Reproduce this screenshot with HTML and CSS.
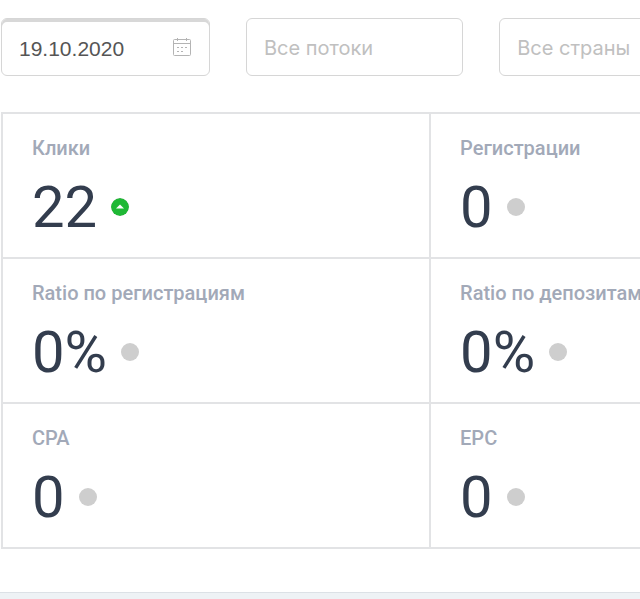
FILE: index.html
```html
<!DOCTYPE html>
<html lang="ru">
<head>
  <meta charset="UTF-8">
  <meta name="viewport" content="width=device-width, initial-scale=1.0">
  <title>Статистика</title>
  <link rel="stylesheet" href="styles.css">
</head>
<body>
  <main class="panel">
    <form class="filters">
      <div class="field date">
        <input type="text" class="input" aria-label="Дата" value="19.10.2020">
        <svg class="calendar" viewBox="0 0 20 20" width="20" height="20" fill="none" stroke="#b4b4b4" aria-hidden="true">
          <rect x="1.5" y="2.5" width="17" height="16" rx="1"/>
          <path d="M1.5 6.5h17M5.5 1v3M14.5 1v3"/>
          <path d="M5 10.5h2M9 10.5h2M13 10.5h2M5 14.5h2M9 14.5h2"/>
        </svg>
      </div>
      <div class="field">
        <input type="text" class="input" aria-label="Потоки" placeholder="Все потоки">
      </div>
      <div class="field">
        <input type="text" class="input" aria-label="Страны" placeholder="Все страны">
      </div>
    </form>

    <div class="stats">
      <section class="stat">
        <h2 class="label">Клики</h2>
        <div class="value">22
          <svg class="dot" viewBox="0 0 18 18" width="18" height="18" aria-hidden="true">
            <circle cx="9" cy="9" r="9" fill="#1fb835"/>
            <path d="M5 10.5L9 6.5l4 4z" fill="#fff"/>
          </svg>
        </div>
      </section>
      <section class="stat">
        <h2 class="label">Регистрации</h2>
        <div class="value">0 <span class="dot"></span></div>
      </section>
      <section class="stat">
        <h2 class="label">Ratio по регистрациям</h2>
        <div class="value">0% <span class="dot"></span></div>
      </section>
      <section class="stat">
        <h2 class="label">Ratio по депозитам</h2>
        <div class="value">0% <span class="dot"></span></div>
      </section>
      <section class="stat">
        <h2 class="label">CPA</h2>
        <div class="value">0 <span class="dot"></span></div>
      </section>
      <section class="stat">
        <h2 class="label">EPC</h2>
        <div class="value">0 <span class="dot"></span></div>
      </section>
    </div>
  </main>
</body>
</html>
```
FILE: styles.css
```css
*{
  box-sizing: border-box;
}
body{
  margin: 0;
  background-color: #eef2f5;
  font-family: Roboto, sans-serif;
  overflow: hidden;
}
.panel{
  padding: 18px 0 43px 1px;
  background-color: #fff;
  border-bottom: 1px solid #dce1e6;
  overflow: hidden;
}

/* filters */
.filters{
  display: flex;
  gap: 36px;
  margin-bottom: 36px;
}
.field{
  position: relative;
  flex: 0 0 34%;
}
.date{
  flex-basis: 209px;
}
.input{
  display: block;
  width: 100%;
  height: 58px;
  padding: 2px 17px 0;
  border: 1px solid #d6d6d6;
  border-radius: 6px;
  background-color: #fff;
  color: #555;
  font-family: Inter, sans-serif;
  font-size: 20px;
}
.input::placeholder{
  color: #c0c0c0;
  opacity: 1;
}
.date .input{
  padding-top: 4px;
  font-family: "Liberation Sans", sans-serif;
  font-size: 21px;
  box-shadow: inset 0 3px 0 #d8d8d8;
}
.calendar{
  position: absolute;
  top: 19px;
  right: 18px;
}

/* stats */
.stats{
  display: grid;
  grid-template-columns: repeat(2, 67.2%);
  border-top: 2px solid #e2e3e5;
  border-left: 2px solid #e2e3e5;
}
.stat{
  padding: 23px 29px 16px;
  border-right: 2px solid #e2e3e5;
  border-bottom: 2px solid #e2e3e5;
}
.label{
  margin: 0 0 14px;
  color: #a2a9b8;
  font-size: 20px;
  font-weight: 500;
  line-height: 22px;
  white-space: nowrap;
}
.value{
  display: flex;
  align-items: center;
  gap: 14px;
  color: #333d4e;
  font-size: 58px;
  line-height: 68px;
}
.dot{
  width: 18px;
  height: 18px;
  border-radius: 50%;
  background-color: #cecece;
}
```
